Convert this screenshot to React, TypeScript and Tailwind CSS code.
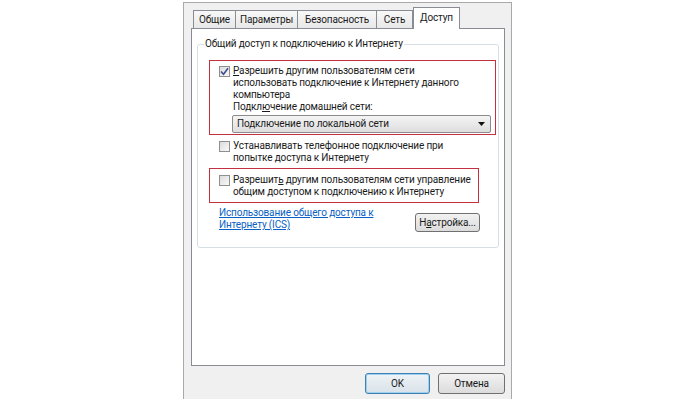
import React from "react";

function Check({ checked }: { checked?: boolean }) {
  return (
    <div className="w-[11px] h-[11px] shrink-0 border border-[#8f8f8f] bg-gradient-to-br from-[#dcdcdc] to-[#f8f8f8] flex items-center justify-center">
      {checked && (
        <svg width="9" height="9" viewBox="0 0 9 9">
          <path d="M1 4.5 L3.5 7.2 L8 1.2" fill="none" stroke="#3d4f8c" strokeWidth="1.6" />
        </svg>
      )}
    </div>
  );
}

const tabCls =
  "h-[18px] mb-px -ml-px border border-b-0 border-[#898c95] bg-gradient-to-b from-[#f8f8f8] to-[#e8e8e8] flex items-center justify-center";

export default function App() {
  const font = { fontFamily: 'Roboto, "Noto Sans", sans-serif' };
  return (
    <div
      className="w-[700px] h-[399px] bg-white overflow-hidden pl-[183px] pt-[2px] text-[10px] tracking-[-0.15px] leading-[12px] text-[#1a1a1a]"
      style={font}
    >
      <div className="w-[329px] h-[400px] bg-[#f0f0f0] border-l border-t border-r border-[#a9a9a9] flex flex-col pl-[7px] pr-[6px]">
        {/* tabs */}
        <div className="flex items-end pl-[3px] h-[26px] relative z-10 -mb-px">
          <div className={tabCls + " w-[43px]"}>Общие</div>
          <div className={tabCls + " w-[63px]"}>Параметры</div>
          <div className={tabCls + " w-[80px]"}>Безопасность</div>
          <div className={tabCls + " w-[37px]"}>Сеть</div>
          <div className="w-[47px] h-[22px] border border-b-0 border-[#898c95] bg-white flex items-start justify-center pt-[4px]">
            Доступ
          </div>
        </div>
        {/* panel */}
        <div className="w-[314px] h-[338px] border border-[#898c95] bg-white px-[5px] pt-[9px]">
          <fieldset className="border border-[#d5dfe5] rounded-[3px] pl-[6px] pr-[1px] pb-[15px]">
            <legend className="px-[1px]">Общий доступ к подключению к Интернету</legend>
            <div className="ml-[5px] mt-[10px] flex flex-col">
              <div className="border border-[#c4303f] w-[287px] pl-[9px] pt-[4px] pb-[1px]">
                <div className="flex gap-[3px]">
                  <div className="pt-[1px]">
                    <Check checked />
                  </div>
                  <div>
                    <span className="underline">Р</span>азрешить другим пользователям сети
                    <br />
                    использовать подключение к Интернету данного
                    <br />
                    компьютера
                  </div>
                </div>
                <div className="pl-[14px]">
                  Подкл<span className="underline">ю</span>чение домашней сети:
                </div>
                <div className="ml-[13px] mt-[2px] w-[259px] h-[18px] border border-[#8b8b8b] rounded-[2px] bg-gradient-to-b from-[#f4f4f4] to-[#dedede] flex items-center justify-between pl-[4px] pr-[5px]">
                  <span>Подключение по локальной сети</span>
                  <svg width="7" height="4" viewBox="0 0 7 4">
                    <path d="M0 0 H7 L3.5 4 Z" fill="#111" />
                  </svg>
                </div>
              </div>
              <div className="flex gap-[3px] pl-[10px] mt-[5px]">
                <div className="pt-[1px]">
                  <Check />
                </div>
                <div>
                  Устанавливать телефонное подключение при
                  <br />
                  попытке доступа к Интернету
                </div>
              </div>
              <div className="border border-[#c4303f] w-[270px] pl-[9px] pt-[5px] pb-[4px] mt-[4px]">
                <div className="flex gap-[3px]">
                  <div className="pt-[1px]">
                    <Check />
                  </div>
                  <div className="whitespace-nowrap">
                    Разрешит<span className="underline">ь</span> другим пользователям сети управление
                    <br />
                    общим доступом к подключению к Интернету
                  </div>
                </div>
              </div>
              <div className="flex items-start justify-between pl-[10px] w-[271px] mt-[4px]">
                <div className="text-[#0a5fc4] underline">
                  Использование общего доступа к
                  <br />
                  Интернету (ICS)
                </div>
                <div className="w-[65px] h-[19px] mt-[6px] border border-[#707070] rounded-[3px] bg-gradient-to-b from-[#f2f2f2] to-[#dcdcdc] flex items-center justify-center">
                  Н<span className="underline">а</span>стройка...
                </div>
              </div>
            </div>
          </fieldset>
        </div>
        {/* buttons */}
        <div className="flex justify-end gap-[8px] pt-[7px]">
          <div className="w-[65px] h-[21px] border border-[#3c7fb1] rounded-[3px] bg-gradient-to-b from-[#eef3f6] to-[#d8e2e9] shadow-[inset_0_0_0_1px_#9fd0ef] flex items-center justify-center">
            OK
          </div>
          <div className="w-[67px] h-[21px] border border-[#707070] rounded-[3px] bg-gradient-to-b from-[#f2f2f2] to-[#dcdcdc] flex items-center justify-center">
            Отмена
          </div>
        </div>
      </div>
    </div>
  );
}
